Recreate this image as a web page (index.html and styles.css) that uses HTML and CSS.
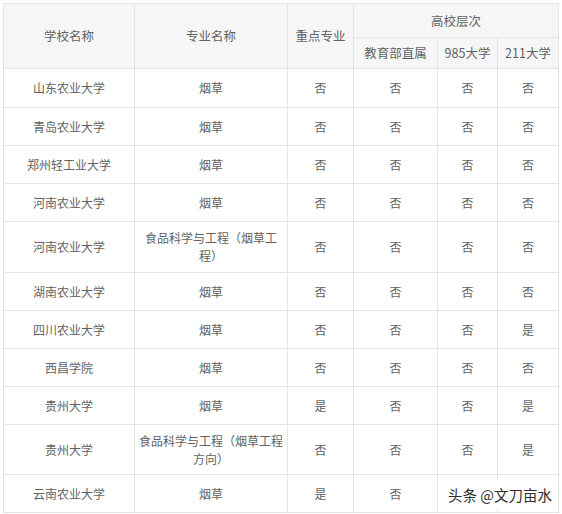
FILE: index.html
```html
<!DOCTYPE html>
<html lang="zh">
<head>
<meta charset="utf-8">
<link rel="stylesheet" href="styles.css">
</head>
<body>
<div class="wrap">
<table class="tbl">
<colgroup>
<col class="c1"><col class="c2"><col class="c3"><col class="c4"><col class="c5"><col class="c6">
</colgroup>
<thead>
<tr class="h1">
<th rowspan="2">学校名称</th>
<th rowspan="2">专业名称</th>
<th rowspan="2">重点专业</th>
<th colspan="3">高校层次</th>
</tr>
<tr class="h2">
<th>教育部直属</th>
<th>985大学</th>
<th>211大学</th>
</tr>
</thead>
<tbody>
<tr class="r first"><td>山东农业大学</td><td>烟草</td><td>否</td><td>否</td><td>否</td><td>否</td></tr>
<tr class="r"><td>青岛农业大学</td><td>烟草</td><td>否</td><td>否</td><td>否</td><td>否</td></tr>
<tr class="r"><td>郑州轻工业大学</td><td>烟草</td><td>否</td><td>否</td><td>否</td><td>否</td></tr>
<tr class="r"><td>河南农业大学</td><td>烟草</td><td>否</td><td>否</td><td>否</td><td>否</td></tr>
<tr class="r2 tall"><td>河南农业大学</td><td>食品科学与工程（烟草工程）</td><td>否</td><td>否</td><td>否</td><td>否</td></tr>
<tr class="r"><td>湖南农业大学</td><td>烟草</td><td>否</td><td>否</td><td>否</td><td>否</td></tr>
<tr class="r"><td>四川农业大学</td><td>烟草</td><td>否</td><td>否</td><td>否</td><td>是</td></tr>
<tr class="r"><td>西昌学院</td><td>烟草</td><td>否</td><td>否</td><td>否</td><td>否</td></tr>
<tr class="r"><td>贵州大学</td><td>烟草</td><td>是</td><td>否</td><td>否</td><td>是</td></tr>
<tr class="r2"><td>贵州大学</td><td>食品科学与工程（烟草工程方向）</td><td>否</td><td>否</td><td>否</td><td>是</td></tr>
<tr class="r"><td>云南农业大学</td><td>烟草</td><td>是</td><td>否</td><td></td><td></td></tr>
</tbody>
</table>
<div class="mark">头条 @文刀亩水</div>
</div>
</body>
</html>
```
FILE: styles.css
```css
html, body {
  margin: 0;
  padding: 0;
  background: #ffffff;
}
body {
  padding: 3px 0 0 3px;
  font-family: "Noto Sans CJK SC", "Noto Sans", sans-serif;
  color: #626262;
  font-size: 12px;
}
.wrap {
  position: relative;
  width: 555px;
}
.tbl {
  border-collapse: collapse;
  table-layout: fixed;
  width: 555px;
}
.c1 { width: 131px; }
.c2 { width: 153px; }
.c3 { width: 66px; }
.c4 { width: 84px; }
.c5 { width: 60px; }
.c6 { width: 61px; }
.tbl th, .tbl td {
  border: 1px solid #e4e4e4;
  text-align: center;
  vertical-align: middle;
  padding: 0 3px;
  line-height: 18px;
  font-weight: normal;
}
.tbl th {
  background: #f6f6f6;
  font-size: 12.5px;
}
.h1 { height: 34px; }
.h2 { height: 31px; }
.r { height: 38px; }
.r.first { height: 39px; }
.r2 { height: 50px; }
.r2.tall { height: 51px; }
.mark {
  position: absolute;
  left: 442px;
  top: 477px;
  width: 110px;
  height: 30px;
  line-height: 30px;
  background: #ffffff;
  color: #2e2e2e;
  font-size: 14.5px;
  text-align: center;
  white-space: nowrap;
}
```
